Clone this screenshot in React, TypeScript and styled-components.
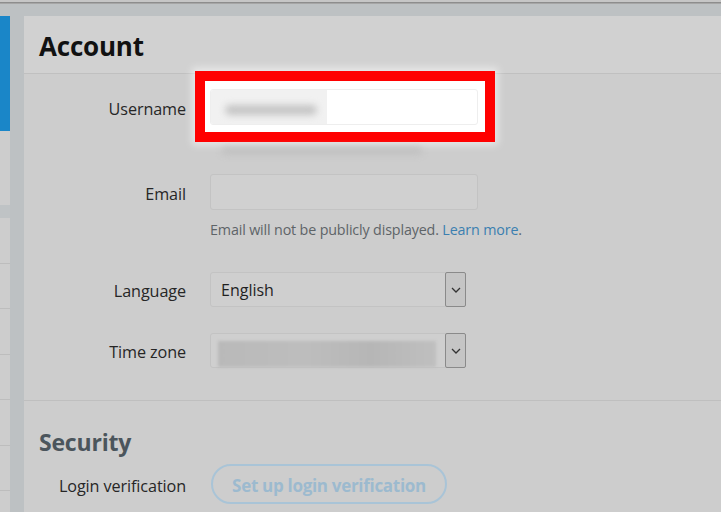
import React from "react";
import styled, { createGlobalStyle } from "styled-components";

const Global = createGlobalStyle`
  html, body { margin: 0; padding: 0; background: #cdcdcd; }
  body { font-family: "Open Sans", "Noto Sans", sans-serif; width: 721px; height: 512px; overflow: hidden; }
  * { box-sizing: border-box; }
`;

const Page = styled.div`
  width: 721px;
  height: 512px;
  display: flex;
  flex-direction: column;
  background: #bdc1c3;
  overflow: hidden;
`;

const TopStrip = styled.div`
  height: 16px;
  flex: none;
  border-top: 2px solid #c6c6c6;
  box-shadow: inset 0 1px 0 #8d8d8d, inset 0 2px 0 #a6a6a6;
  background: #bdc1c3;
`;

const Body = styled.div`
  flex: 1;
  display: flex;
  min-height: 0;
`;

const Sidebar = styled.div`
  width: 10px;
  flex: none;
  display: flex;
  flex-direction: column;
  background: #cdcdcd;
`;

const SideActive = styled.div`
  height: 115px;
  background: #1a86c8;
`;

const SideBlank = styled.div`
  height: 74px;
  background: #cdcdcd;
`;

const SideBand = styled.div`
  height: 13px;
  background: #bfc3c5;
`;

const SideItem = styled.div`
  height: 45.5px;
  flex: none;
  border-bottom: 1px solid #bdbdbd;
  background: #cdcdcd;
`;

const Gutter = styled.div`
  width: 14px;
  flex: none;
  background: #bdc1c3;
`;

const Main = styled.div`
  flex: 1;
  display: flex;
  flex-direction: column;
  background: #cdcdcd;
`;

const Header = styled.div`
  height: 58px;
  flex: none;
  display: flex;
  align-items: center;
  padding: 2px 0 0 15px;
  background: #d1d1d1;
  border-bottom: 1px solid #c0c0c0;
`;

const Title = styled.h1<{ $muted?: boolean }>`
  margin: 0;
  font-family: "Open Sans", sans-serif;
  font-weight: 700;
  font-size: ${(p) => (p.$muted ? "23px" : "26px")};
  letter-spacing: -0.2px;
  color: ${(p) => (p.$muted ? "#4b555c" : "#111111")};
  line-height: 30px;
`;

const Form = styled.div`
  display: flex;
  flex-direction: column;
  padding-top: 15px;
`;

const Row = styled.div<{ $mt?: number }>`
  display: flex;
  align-items: center;
  margin-top: ${(p) => p.$mt ?? 0}px;
`;

const Label = styled.div`
  width: 162px;
  flex: none;
  text-align: right;
  font-size: 16.2px;
  color: #262626;
  margin-right: 24px;
  padding-top: 3px;
  letter-spacing: -0.1px;
`;

const Help = styled.div<{ $mt?: number }>`
  margin: ${(p) => p.$mt ?? 0}px 0 0 186px;
  font-size: 14.3px;
  line-height: 20px;
  color: #5e6468;
  letter-spacing: -0.15px;
`;

const BlurHelp = styled.div`
  margin: 22px 0 0 198px;
  width: 200px;
  height: 8px;
  border-radius: 4px;
  background: #c1c1c1;
  filter: blur(3px);
`;

const Link = styled.a`
  color: #3b7fb0;
  text-decoration: none;
`;

const FieldWrap = styled.div`
  position: relative;
  width: 268px;
  height: 36px;
`;

const Highlight = styled.div`
  position: absolute;
  left: -15px;
  top: -18px;
  right: -17px;
  bottom: -17px;
  border: 10px solid #ff0000;
  background: #ffffff;
  box-shadow: 0 0 8px 3px rgba(255, 255, 255, 0.55);
`;

const Input = styled.div<{ $white?: boolean }>`
  position: relative;
  width: 268px;
  height: 36px;
  border-radius: 3px;
  border: 1px solid ${(p) => (p.$white ? "#eeeeee" : "#c3c3c3")};
  background: ${(p) => (p.$white ? "#ffffff" : "#d0d0d0")};
  display: flex;
  align-items: center;
  overflow: hidden;
`;

const BlurValue = styled.div`
  width: 116px;
  height: 100%;
  background: #f1f1f1;
  display: flex;
  align-items: center;
  padding-left: 14px;
`;

const BlurText = styled.div`
  width: 92px;
  height: 10px;
  margin-top: 6px;
  border-radius: 5px;
  background: #c4c4c4;
  filter: blur(3.5px);
`;

const Select = styled.div`
  width: 256px;
  height: 35px;
  display: flex;
  border-radius: 3px;
  border: 1px solid #c3c3c3;
  background: #cfcfcf;
`;

const SelectValue = styled.div`
  flex: 1;
  display: flex;
  align-items: center;
  padding: 0 6px 0 10px;
  font-size: 16px;
  color: #1f1f1f;
`;

const BlurSelect = styled.div`
  width: 100%;
  height: 26px;
  margin-top: 6px;
  margin-left: -3px;
  background: linear-gradient(90deg, #b9b9b9, #bdbdbd 40%, #b6b6b6 70%, #bfbfbf);
  filter: blur(1.5px);
`;

const Arrow = styled.div`
  width: 21px;
  flex: none;
  margin: -1px -1px -1px 0;
  border: 1px solid #8a8a8a;
  border-radius: 2px;
  background: #c5c5c5;
  display: flex;
  align-items: center;
  justify-content: center;
`;

const Divider = styled.div`
  margin-top: 32px;
  border-top: 1px solid #bfbfbf;
`;

const Section = styled.div`
  padding: 26px 0 0 15px;
`;

const PillButton = styled.button`
  width: 236px;
  height: 40px;
  border-radius: 20px;
  border: 2px solid #a9c4d7;
  background: transparent;
  font-family: "Open Sans", sans-serif;
  font-weight: 700;
  font-size: 17px;
  letter-spacing: -0.3px;
  color: #9cbacf;
  padding: 2px 0 0;
  margin-left: 1px;
`;

const Chevron = () => (
  <svg width="10" height="6" viewBox="0 0 10 6">
    <path d="M1 1 L5 5 L9 1" fill="none" stroke="#333" strokeWidth="1.3" />
  </svg>
);

export default function App() {
  return (
    <>
      <Global />
      <Page>
        <TopStrip />
        <Body>
          <Sidebar>
            <SideActive />
            <SideBlank />
            <SideBand />
            <SideItem />
            <SideItem />
            <SideItem />
            <SideItem />
            <SideItem />
            <SideItem />
          </Sidebar>
          <Gutter />
          <Main>
            <Header>
              <Title>Account</Title>
            </Header>
            <Form>
              <Row>
                <Label>Username</Label>
                <FieldWrap>
                  <Highlight />
                  <Input $white>
                    <BlurValue>
                      <BlurText />
                    </BlurValue>
                  </Input>
                </FieldWrap>
              </Row>
              <BlurHelp />
              <Row $mt={19}>
                <Label>Email</Label>
                <Input />
              </Row>
              <Help $mt={10}>
                Email will not be publicly displayed. <Link>Learn more</Link>.
              </Help>
              <Row $mt={32}>
                <Label>Language</Label>
                <Select>
                  <SelectValue>English</SelectValue>
                  <Arrow>
                    <Chevron />
                  </Arrow>
                </Select>
              </Row>
              <Row $mt={26}>
                <Label>Time zone</Label>
                <Select>
                  <SelectValue>
                    <BlurSelect />
                  </SelectValue>
                  <Arrow>
                    <Chevron />
                  </Arrow>
                </Select>
              </Row>
              <Divider />
            </Form>
            <Section>
              <Title $muted>Security</Title>
            </Section>
            <Row $mt={7}>
              <Label>Login verification</Label>
              <PillButton>Set up login verification</PillButton>
            </Row>
          </Main>
        </Body>
      </Page>
    </>
  );
}
